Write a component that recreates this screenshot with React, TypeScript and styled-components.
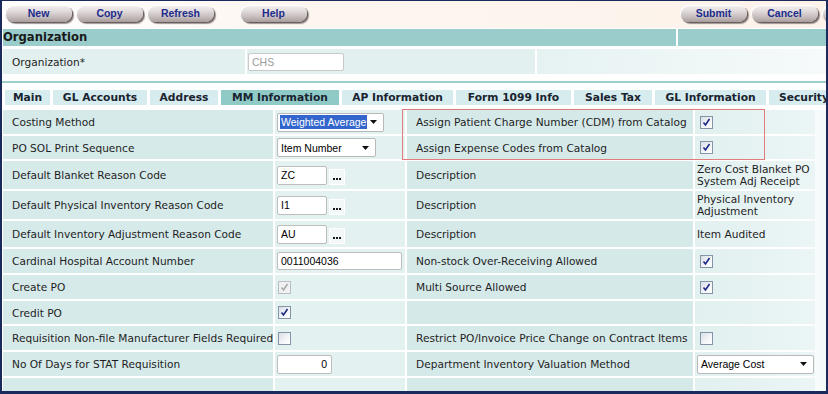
import React from "react";
import styled, { createGlobalStyle } from "styled-components";

const Global = createGlobalStyle`
  html, body { margin: 0; padding: 0; background: #ffffff; }
  * { box-sizing: border-box; }
`;

const LABEL_FONT = `"DejaVu Sans", Verdana, sans-serif`;
const INPUT_FONT = `"Liberation Sans", Arial, sans-serif`;

const Frame = styled.div`
  width: 828px;
  height: 394px;
  border-style: solid;
  border-color: #1b2a5c;
  border-width: 1px 2px 3px 2px;
  overflow: hidden;
  background: #ffffff;
  display: flex;
  flex-direction: column;
`;

const Toolbar = styled.div`
  height: 28px;
  flex: none;
  display: flex;
  align-items: flex-start;
  padding: 4px 0 0 3px;
  gap: 4px;
  background: linear-gradient(to right, #ffffff 0%, #fdf6f0 35%, #fcf2ea 100%);
  border-bottom: 1px solid #ffffff;
  overflow: hidden;
`;

const Button = styled.button<{ $gapBefore?: number }>`
  flex: none;
  width: 67px;
  height: 17px;
  margin-left: ${(p) => p.$gapBefore ?? 0}px;
  border: none;
  border-radius: 9px / 8px;
  padding: 0;
  background: linear-gradient(to bottom, #f6f3f3 0%, #e2dcdc 35%, #c6bdbd 70%, #a89d9d 100%);
  box-shadow: inset 1px 1px 0 #ffffff, 1px 1px 0 #6a5e5e, 2px 2px 1px rgba(40, 30, 30, 0.45);
  font: bold 10.5px ${INPUT_FONT};
  color: #1c2c8c;
  text-align: center;
  line-height: 17px;
`;

const HeaderBar = styled.div`
  height: 17px;
  flex: none;
  display: flex;
  gap: 2px;
  padding-left: 1px;
`;

const HeaderCell = styled.div<{ $w?: number }>`
  ${(p) => (p.$w ? `width: ${p.$w}px; flex: none;` : "flex: 1;")}
  background: #99cccb;
  font: bold 11.6px ${LABEL_FONT};
  color: #1a1a1a;
  line-height: 17px;
  white-space: nowrap;
`;

const OrgRow = styled.div`
  margin-top: 3px;
  height: 25px;
  flex: none;
  display: flex;
  gap: 2px;
  padding-left: 1px;
`;

const OrgCell = styled.div<{ $w?: number; $fade?: boolean; $pad?: number }>`
  ${(p) => (p.$w ? `width: ${p.$w}px; flex: none;` : "flex: 1;")}
  background: ${(p) =>
    p.$fade ? "linear-gradient(to right, #e6f2f2, #f6fafa)" : "#e3f0f0"};
  display: flex;
  align-items: center;
  padding-left: ${(p) => p.$pad ?? 1}px;
  font: 10.6px ${LABEL_FONT};
  color: #1e1e1e;
  white-space: nowrap;
`;

const Rule = styled.div`
  margin-top: 7px;
  height: 2px;
  flex: none;
  background: #9dcfcc;
`;

const Tabs = styled.div`
  margin-top: 7px;
  height: 15px;
  flex: none;
  display: flex;
  gap: 3px;
  padding-left: 3px;
`;

const Tab = styled.div<{ $w: number; $active?: boolean }>`
  flex: none;
  width: ${(p) => p.$w}px;
  background: ${(p) => (p.$active ? "#8fcac6" : "#d6ecee")};
  font: bold 10.7px ${LABEL_FONT};
  color: #1a2430;
  text-align: center;
  line-height: 15px;
  white-space: nowrap;
  overflow: hidden;
`;

const FormArea = styled.div`
  position: relative;
  margin-top: 5px;
  flex: 1;
  padding-left: 1px;
  background: linear-gradient(to right, #ffffff 0%, #ffffff 97%, #f4f9f9 100%);
`;

const Grid = styled.div`
  display: grid;
  grid-template-columns: 270px 130px 286px 120px;
  grid-template-rows: 24px 23px 28px 28px 26px 24px 24px 23px 24px 24px 14px;
  column-gap: 2px;
  row-gap: 2px;
`;

const Cell = styled.div<{ $kind: "label" | "value" | "label2" | "value2" }>`
  display: flex;
  align-items: center;
  padding-left: ${(p) => (p.$kind === "label" || p.$kind === "label2" ? 9 : 2)}px;
  background: ${(p) =>
    p.$kind === "label"
      ? "#d6eaea"
      : p.$kind === "value"
      ? "#e4f1f1"
      : p.$kind === "label2"
      ? "#d5e9e9"
      : "linear-gradient(to right, #e2f0f0, #ebf5f5)"};
  font: 10.6px ${LABEL_FONT};
  color: #1e1e1e;
  white-space: nowrap;
  gap: 2px;
`;

const Multi = styled.div`
  line-height: 12px;
  white-space: normal;
  font: 10.6px ${LABEL_FONT};
  color: #1e1e1e;
`;

const SelectBox = styled.div<{ $w: number }>`
  width: ${(p) => p.$w}px;
  height: 19px;
  border: 1px solid #b9b9b9;
  border-radius: 2px;
  background: #ffffff;
  display: flex;
  align-items: center;
  padding: 0 6px 0 2px;
  font: 10.5px ${INPUT_FONT};
  color: #000;
`;

const Chosen = styled.span<{ $hl?: boolean }>`
  padding: 1px 1px;
  background: ${(p) => (p.$hl ? "#3366cc" : "transparent")};
  color: ${(p) => (p.$hl ? "#ffffff" : "#000000")};
`;

const Arrow = styled.svg`
  margin-left: auto;
  flex: none;
`;

const TextInput = styled.div<{ $w: number; $right?: boolean; $muted?: boolean; $h?: number }>`
  width: ${(p) => p.$w}px;
  height: ${(p) => p.$h ?? 19}px;
  border: 1px solid ${(p) => (p.$muted ? "#c9c9c9" : "#bdbdbd")};
  border-radius: 2px;
  background: #ffffff;
  display: flex;
  align-items: center;
  justify-content: ${(p) => (p.$right ? "flex-end" : "flex-start")};
  padding: 0 4px 0 3px;
  font: 10.5px ${INPUT_FONT};
  color: ${(p) => (p.$muted ? "#9a9a9a" : "#000000")};
`;

const Dots = styled.div`
  width: 16px;
  height: 16px;
  margin-top: 3px;
  background: #f2f7f7;
  border: 1px solid #ffffff;
  display: flex;
  align-items: flex-end;
  justify-content: center;
  gap: 1px;
  padding-bottom: 4px;
`;

const Dot = styled.span`
  width: 2px;
  height: 2px;
  background: #1a1a1a;
`;

const Box = styled.span<{ $disabled?: boolean; $ml?: number }>`
  width: 13px;
  height: 13px;
  margin-left: ${(p) => p.$ml ?? 0}px;
  border: 1px solid ${(p) => (p.$disabled ? "#b8bec4" : "#8595a8")};
  background: ${(p) =>
    p.$disabled ? "#f1f1f1" : "linear-gradient(135deg, #d9dee6 0%, #f4f6f8 60%, #ffffff 100%)"};
  display: inline-flex;
  align-items: center;
  justify-content: center;
  flex: none;
`;

const RedBox = styled.div`
  position: absolute;
  left: 400px;
  top: -1px;
  width: 363px;
  height: 51px;
  border: 1px solid #e27c7c;
  pointer-events: none;
`;

const Check = ({ checked = false, disabled = false, ml = 0 }: { checked?: boolean; disabled?: boolean; ml?: number }) => (
  <Box $disabled={disabled} $ml={ml}>
    {checked && (
      <svg width="9" height="9" viewBox="0 0 9 9">
        <path
          d="M1.5 4.5 L3.5 7 L7.5 1"
          fill="none"
          stroke={disabled ? "#a9a9a9" : "#1b2886"}
          strokeWidth="1.6"
        />
      </svg>
    )}
  </Box>
);

const Select = ({ w, text, hl }: { w: number; text: string; hl?: boolean }) => (
  <SelectBox $w={w}>
    <Chosen $hl={hl}>{text}</Chosen>
    <Arrow width="7" height="4" viewBox="0 0 7 4">
      <path d="M0 0 H7 L3.5 4 Z" fill="#111" />
    </Arrow>
  </SelectBox>
);

const Ellipsis = () => (
  <Dots aria-label="...">
    <Dot />
    <Dot />
    <Dot />
  </Dots>
);

export default function App() {
  return (
    <>
      <Global />
      <Frame>
        <Toolbar>
          <Button>New</Button>
          <Button>Copy</Button>
          <Button>Refresh</Button>
          <Button $gapBefore={22}>Help</Button>
          <Button $gapBefore={369}>Submit</Button>
          <Button>Cancel</Button>
          <Button />
        </Toolbar>

        <HeaderBar>
          <HeaderCell>Organization</HeaderCell>
          <HeaderCell $w={148} />
        </HeaderBar>

        <OrgRow>
          <OrgCell $w={242} $pad={9}>
            Organization*
          </OrgCell>
          <OrgCell $w={288}>
            <TextInput $w={96} $h={18} $muted>
              CHS
            </TextInput>
          </OrgCell>
          <OrgCell $fade />
        </OrgRow>

        <Rule />

        <Tabs>
          <Tab $w={45}>Main</Tab>
          <Tab $w={94}>GL Accounts</Tab>
          <Tab $w={68}>Address</Tab>
          <Tab $w={118} $active>
            MM Information
          </Tab>
          <Tab $w={111}>AP Information</Tab>
          <Tab $w={115}>Form 1099 Info</Tab>
          <Tab $w={78}>Sales Tax</Tab>
          <Tab $w={111}>GL Information</Tab>
          <Tab $w={70}>Security</Tab>
        </Tabs>

        <FormArea>
          <Grid>
            <Cell $kind="label">Costing Method</Cell>
            <Cell $kind="value">
              <Select w={107} text="Weighted Average" hl />
            </Cell>
            <Cell $kind="label2">Assign Patient Charge Number (CDM) from Catalog</Cell>
            <Cell $kind="value2">
              <Check checked ml={3} />
            </Cell>

            <Cell $kind="label">PO SOL Print Sequence</Cell>
            <Cell $kind="value">
              <Select w={99} text="Item Number" />
            </Cell>
            <Cell $kind="label2">Assign Expense Codes from Catalog</Cell>
            <Cell $kind="value2">
              <Check checked ml={3} />
            </Cell>

            <Cell $kind="label">Default Blanket Reason Code</Cell>
            <Cell $kind="value">
              <TextInput $w={50}>ZC</TextInput>
              <Ellipsis />
            </Cell>
            <Cell $kind="label2">Description</Cell>
            <Cell $kind="value2">
              <Multi>
                Zero Cost Blanket PO
                <br />
                System Adj Receipt
              </Multi>
            </Cell>

            <Cell $kind="label">Default Physical Inventory Reason Code</Cell>
            <Cell $kind="value">
              <TextInput $w={50}>I1</TextInput>
              <Ellipsis />
            </Cell>
            <Cell $kind="label2">Description</Cell>
            <Cell $kind="value2">
              <Multi>
                Physical Inventory
                <br />
                Adjustment
              </Multi>
            </Cell>

            <Cell $kind="label">Default Inventory Adjustment Reason Code</Cell>
            <Cell $kind="value">
              <TextInput $w={50}>AU</TextInput>
              <Ellipsis />
            </Cell>
            <Cell $kind="label2">Description</Cell>
            <Cell $kind="value2">Item Audited</Cell>

            <Cell $kind="label">Cardinal Hospital Account Number</Cell>
            <Cell $kind="value">
              <TextInput $w={125} $h={18}>
                0011004036
              </TextInput>
            </Cell>
            <Cell $kind="label2">Non-stock Over-Receiving Allowed</Cell>
            <Cell $kind="value2">
              <Check checked ml={3} />
            </Cell>

            <Cell $kind="label">Create PO</Cell>
            <Cell $kind="value">
              <Check checked disabled ml={1} />
            </Cell>
            <Cell $kind="label2">Multi Source Allowed</Cell>
            <Cell $kind="value2">
              <Check checked ml={3} />
            </Cell>

            <Cell $kind="label">Credit PO</Cell>
            <Cell $kind="value">
              <Check checked ml={1} />
            </Cell>
            <Cell $kind="label2" />
            <Cell $kind="value2" />

            <Cell $kind="label">Requisition Non-file Manufacturer Fields Required</Cell>
            <Cell $kind="value">
              <Check ml={1} />
            </Cell>
            <Cell $kind="label2">Restrict PO/Invoice Price Change on Contract Items</Cell>
            <Cell $kind="value2">
              <Check ml={3} />
            </Cell>

            <Cell $kind="label">No Of Days for STAT Requisition</Cell>
            <Cell $kind="value">
              <TextInput $w={55} $right>
                0
              </TextInput>
            </Cell>
            <Cell $kind="label2">Department Inventory Valuation Method</Cell>
            <Cell $kind="value2">
              <Select w={117} text="Average Cost" />
            </Cell>

            <Cell $kind="label" />
            <Cell $kind="value" />
            <Cell $kind="label2" />
            <Cell $kind="value2" />
          </Grid>
          <RedBox />
        </FormArea>
      </Frame>
    </>
  );
}
